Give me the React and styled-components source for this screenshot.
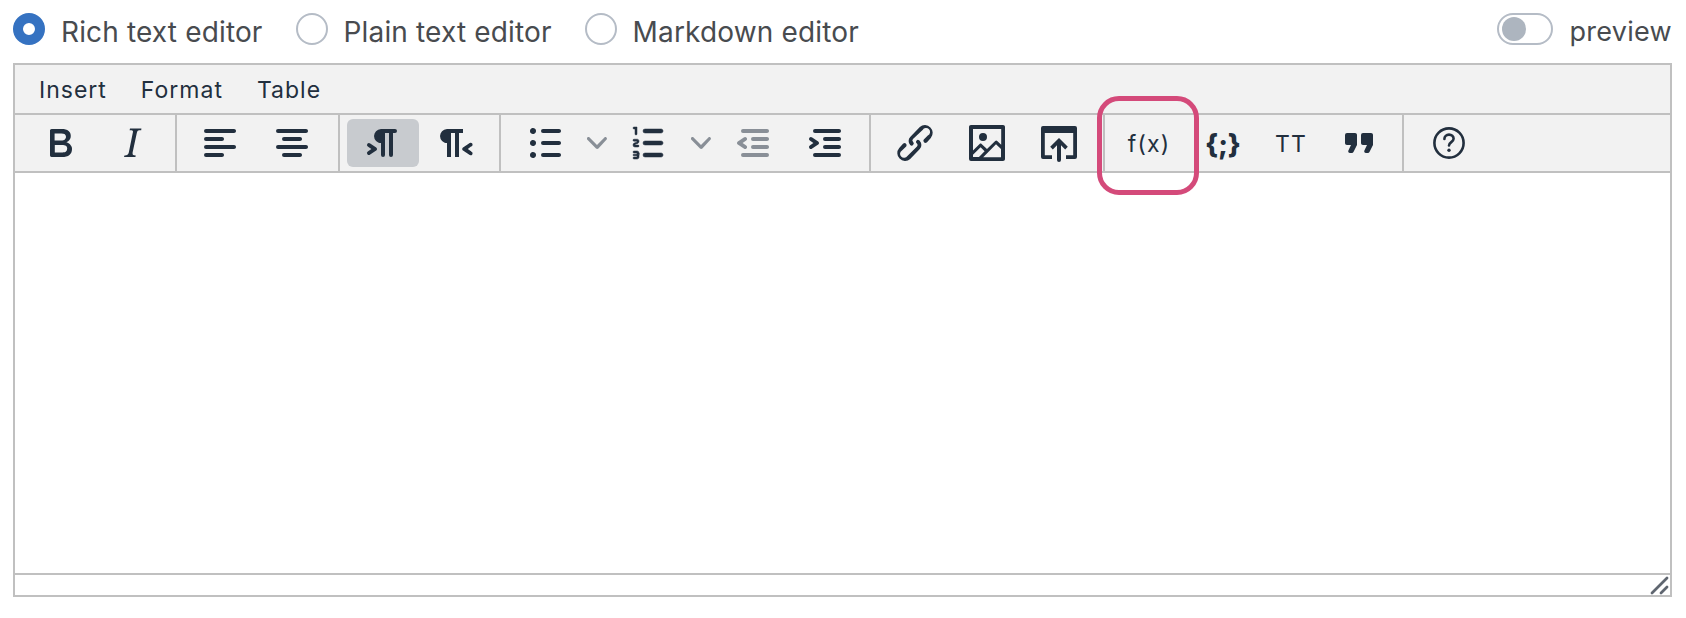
import React from 'react'
import styled, { createGlobalStyle } from 'styled-components'

const ICONS = {
  bold: 'M7.8 19c-.3 0-.5 0-.6-.2l-.2-.5V5.7c0-.2 0-.4.2-.5l.6-.2h5c1.5 0 2.7.3 3.5 1 .7.6 1.1 1.4 1.1 2.5a3 3 0 0 1-.6 1.9c-.4.6-1 1-1.6 1.2.4.1.9.3 1.3.6s.8.7 1 1.2c.4.4.5 1 .5 1.6 0 1.3-.4 2.3-1.3 3-.8.7-2.1 1-3.8 1H7.8zm5-8.3c.6 0 1.2-.1 1.6-.5.4-.3.6-.7.6-1.3 0-1.1-.8-1.7-2.3-1.7H9.3v3.5h3.4zm.5 6c.7 0 1.3-.1 1.7-.4.4-.4.6-.9.6-1.5s-.2-1-.7-1.4c-.4-.3-1-.4-2-.4H9.4v3.8h4z',
  italic: 'M16.7 4.7l-.1.9h-.3c-.6 0-1 0-1.4.3-.3.3-.4.6-.5 1.1l-2.1 9.8v.6c0 .5.4.8 1.4.8h.2l-.2.8H8l.2-.8h.2c1.1 0 1.8-.5 2-1.5l2-9.8.1-.5c0-.6-.4-.8-1.4-.8h-.3l.2-.9h5.8z',
  alignLeft: 'M5 5h14c.6 0 1 .4 1 1s-.4 1-1 1H5a1 1 0 1 1 0-2zm0 4h8c.6 0 1 .4 1 1s-.4 1-1 1H5a1 1 0 1 1 0-2zm0 8h8c.6 0 1 .4 1 1s-.4 1-1 1H5a1 1 0 0 1 0-2zm0-4h14c.6 0 1 .4 1 1s-.4 1-1 1H5a1 1 0 0 1 0-2z',
  alignCenter: 'M5 5h14c.6 0 1 .4 1 1s-.4 1-1 1H5a1 1 0 1 1 0-2zm3 4h8c.6 0 1 .4 1 1s-.4 1-1 1H8a1 1 0 1 1 0-2zm0 8h8c.6 0 1 .4 1 1s-.4 1-1 1H8a1 1 0 0 1 0-2zm-3-4h14c.6 0 1 .4 1 1s-.4 1-1 1H5a1 1 0 0 1 0-2z',
  ltr: 'M11 5h7a1 1 0 0 1 0 2h-1v11a1 1 0 0 1-2 0V7h-2v11a1 1 0 0 1-2 0v-6c-.5 0-1 0-1.4-.3A3.4 3.4 0 0 1 7.8 10a3.3 3.3 0 0 1 0-2.8 3.4 3.4 0 0 1 1.8-1.8L11 5zM4.4 16.2L6.2 15l-1.8-1.2a1 1 0 0 1 1.2-1.6l3 2a1 1 0 0 1 0 1.6l-3 2a1 1 0 1 1-1.2-1.6z',
  rtl: 'M8 5h8v2h-2v12h-2V7h-2v12H8v-7c-.5 0-1 0-1.4-.3A3.4 3.4 0 0 1 4.8 10a3.3 3.3 0 0 1 0-2.8 3.4 3.4 0 0 1 1.8-1.8L8 5zm12 11.2a1 1 0 1 1-1 1.6l-3-2a1 1 0 0 1 0-1.6l3-2a1 1 0 1 1 1 1.6L18.4 15l1.8 1.2z',
  bullist: 'M11 5h8c.6 0 1 .4 1 1s-.4 1-1 1h-8a1 1 0 0 1 0-2zm0 6h8c.6 0 1 .4 1 1s-.4 1-1 1h-8a1 1 0 0 1 0-2zm0 6h8c.6 0 1 .4 1 1s-.4 1-1 1h-8a1 1 0 0 1 0-2zM4.5 6c0-.4.1-.8.4-1 .3-.4.7-.5 1.1-.5s.8.1 1 .4c.4.3.5.7.5 1.1s-.1.8-.4 1c-.3.4-.7.5-1.1.5s-.8-.1-1-.4c-.4-.3-.5-.7-.5-1.1zm0 6c0-.4.1-.8.4-1 .3-.4.7-.5 1.1-.5s.8.1 1 .4c.4.3.5.7.5 1.1s-.1.8-.4 1c-.3.4-.7.5-1.1.5s-.8-.1-1-.4c-.4-.3-.5-.7-.5-1.1zm0 6c0-.4.1-.8.4-1 .3-.4.7-.5 1.1-.5s.8.1 1 .4c.4.3.5.7.5 1.1s-.1.8-.4 1c-.3.4-.7.5-1.1.5s-.8-.1-1-.4c-.4-.3-.5-.7-.5-1.1z',
  numlist: 'M10 17h8c.6 0 1 .4 1 1s-.4 1-1 1h-8a1 1 0 0 1 0-2zm0-6h8c.6 0 1 .4 1 1s-.4 1-1 1h-8a1 1 0 0 1 0-2zm0-6h8c.6 0 1 .4 1 1s-.4 1-1 1h-8a1 1 0 1 1 0-2zM6 4v3.5c0 .3-.2.5-.5.5a.5.5 0 0 1-.5-.5V5h-.5a.5.5 0 0 1 0-1H6zm-1 8.8l.2.2h1.3c.3 0 .5.2.5.5s-.2.5-.5.5H4.9a1 1 0 0 1-.9-1V13c0-.4.3-.8.6-1l1.2-.4.2-.3a.2.2 0 0 0-.2-.2H4.5a.5.5 0 0 1-.5-.5c0-.3.2-.5.5-.5h1.6c.5 0 .9.4.9 1v.1c0 .4-.3.8-.6 1l-1.2.4-.2.3zM7 17v2c0 .6-.4 1-1 1H4.5a.5.5 0 0 1 0-1h1.2c.2 0 .3-.1.3-.3 0-.2-.1-.3-.3-.3H4.4a.4.4 0 1 1 0-.8h1.3c.2 0 .3-.1.3-.3 0-.2-.1-.3-.3-.3H4.5a.5.5 0 1 1 0-1H6c.6 0 1 .4 1 1v.3c0 .2 0 .3-.2.4.1.1.2.2.2.4z',
  outdent: 'M7 5h12c.6 0 1 .4 1 1s-.4 1-1 1H7a1 1 0 1 1 0-2zm5 4h7c.6 0 1 .4 1 1s-.4 1-1 1h-7a1 1 0 0 1 0-2zm0 4h7c.6 0 1 .4 1 1s-.4 1-1 1h-7a1 1 0 0 1 0-2zm-5 4h12a1 1 0 0 1 0 2H7a1 1 0 0 1 0-2zm1.6-3.8a1 1 0 0 1-1.2 1.6l-3-2a1 1 0 0 1 0-1.6l3-2a1 1 0 0 1 1.2 1.6L6.8 12l1.8 1.2z',
  indent: 'M7 5h12c.6 0 1 .4 1 1s-.4 1-1 1H7a1 1 0 1 1 0-2zm5 4h7c.6 0 1 .4 1 1s-.4 1-1 1h-7a1 1 0 0 1 0-2zm0 4h7c.6 0 1 .4 1 1s-.4 1-1 1h-7a1 1 0 0 1 0-2zm-5 4h12a1 1 0 0 1 0 2H7a1 1 0 0 1 0-2zm-2.6-3.8L6.2 12l-1.8-1.2a1 1 0 0 1 1.2-1.6l3 2a1 1 0 0 1 0 1.6l-3 2a1 1 0 1 1-1.2-1.6z',
  link: 'M6.2 12.3a1 1 0 0 1 1.4 1.4l-2.1 2a2 2 0 1 0 2.7 2.8l4.8-4.8a1 1 0 0 0 0-1.4 1 1 0 1 1 1.4-1.3 2.9 2.9 0 0 1 0 4L9.6 20a3.9 3.9 0 0 1-5.5-5.5l2-2.2zm11.6-.6a1 1 0 0 1-1.4-1.4l2-2a2 2 0 1 0-2.6-2.8L11 10a1 1 0 0 0 0 1.4A1 1 0 1 1 9.6 13a2.9 2.9 0 0 1 0-4L14.4 4a3.9 3.9 0 0 1 5.5 5.5l-2 2.2z',
  image: 'M5 15.7l3.3-3.2c.3-.3.7-.3 1 0L12 15l4.1-4c.3-.4.8-.4 1 0l2 1.9V5H5v10.7zM5 18V19h3l2.8-2.9-2-2L5 17.9zm14-3l-2.5-2.4-6.4 6.5H19v-4zM4 3h16c.6 0 1 .4 1 1v16c0 .6-.4 1-1 1H4a1 1 0 0 1-1-1V4c0-.6.4-1 1-1zm6 8a2 2 0 1 0 0-4 2 2 0 0 0 0 4z',
  upload: 'M4 3.500h16a1 1 0 0 1 1 1V19a1 1 0 0 1-1 1h-4.500v-1.900h3.600V7H4.900v11.100h3.600V20H4a1 1 0 0 1-1-1V4.500a1 1 0 0 1 1-1zM12 9.500l4.400 4.400-1.300 1.300-2.100-2.100V20.500a1 1 0 0 1-2 0v-7.400l-2.100 2.100-1.300-1.300z',
  quote: 'M7.500 17h.9c.4 0 .7-.2.9-.6L11 13V8c0-.6-.4-1-1-1H6a1 1 0 0 0-1 1v4c0 .6.4 1 1 1h2l-1.300 2.700a1 1 0 0 0 .8 1.300zm8 0h.9c.4 0 .7-.2.9-.6L19 13V8c0-.6-.4-1-1-1h-4a1 1 0 0 0-1 1v4c0 .6.4 1 1 1h2l-1.300 2.700a1 1 0 0 0 .8 1.300z',
}

const GROUPS = [
  { left: 9, right: 7, items: [{ icon: 'bold' }, { icon: 'italic' }] },
  { left: 7, right: 10, items: [{ icon: 'alignLeft' }, { icon: 'alignCenter' }] },
  { left: 7, right: 8, items: [{ icon: 'ltr', active: true }, { icon: 'rtl' }] },
  {
    left: 8,
    right: 8,
    items: [
      { icon: 'bullist' },
      { chevron: true },
      { icon: 'numlist', heavy: true },
      { chevron: true },
      { icon: 'outdent', disabled: true },
      { icon: 'indent' },
    ],
  },
  {
    left: 8,
    right: 8,
    items: [{ icon: 'link' }, { icon: 'image' }, { icon: 'upload' }],
  },
  {
    left: 7,
    right: 9,
    items: [
      { text: 'f(x)', width: 74, highlight: true },
      { text: '{;}', strong: true, width: 68, offset: 3 },
      { text: 'TT', width: 68 },
      { icon: 'quote', width: 68 },
    ],
  },
  { left: 9, right: 0, items: [{ help: true }] },
]

const GlobalStyle = createGlobalStyle`
  body {
    margin: 0;
    background: #fff;
    font-family: Inter, "Liberation Sans", sans-serif;
  }
`

function Icon({ d, heavy }) {
  return (
    <IconSvg viewBox="0 0 24 24" $heavy={heavy}>
      <path d={d} fillRule="evenodd" />
    </IconSvg>
  )
}

function ToolButton({ item }) {
  if (item.chevron) {
    return (
      <Chevron>
        <svg width="20" height="20" viewBox="0 0 10 10" fill="#222f3e">
          <path d="M8.700 2.200c.3-.3.8-.3 1 0 .4.400.4.900 0 1.200L5.700 7.800c-.3.3-.9.3-1.200 0L.2 3.400a.8.800 0 0 1 0-1.200c.3-.3.800-.3 1.100 0L5 6l3.700-3.800z" />
        </svg>
      </Chevron>
    )
  }
  return (
    <Button
      $active={item.active}
      $disabled={item.disabled}
      $width={item.width}
      $offset={item.offset}
    >
      {item.icon && <Icon d={ICONS[item.icon]} heavy={item.heavy} />}
      {item.help && (
        <IconSvg viewBox="0 0 24 24">
          <circle cx="12" cy="12" r="7.300" fill="none" stroke="#222f3e" strokeWidth="1.300" />
          <path
            d="M9.700 10c0-1.300 1-2.200 2.300-2.200s2.300.9 2.300 2.100c0 1.600-2.300 1.700-2.300 3.300"
            fill="none"
            stroke="#222f3e"
            strokeWidth="1.300"
            strokeLinecap="round"
          />
          <circle cx="12" cy="15.600" r=".85" />
        </IconSvg>
      )}
      {item.text && <ButtonText $strong={item.strong}>{item.text}</ButtonText>}
      {item.highlight && <Highlight />}
    </Button>
  )
}

export default function App() {
  return (
    <Page>
      <GlobalStyle />
      <ModeRow>
        <Mode>
          <Radio $checked />
          <ModeText>Rich text editor</ModeText>
        </Mode>
        <Mode>
          <Radio />
          <ModeText>Plain text editor</ModeText>
        </Mode>
        <Mode>
          <Radio />
          <ModeText>Markdown editor</ModeText>
        </Mode>
        <Preview>
          <Toggle />
          <ModeText $small>preview</ModeText>
        </Preview>
      </ModeRow>
      <Editor>
        <MenuBar>
          <MenuItem>Insert</MenuItem>
          <MenuItem>Format</MenuItem>
          <MenuItem>Table</MenuItem>
        </MenuBar>
        <Toolbar>
          {GROUPS.map((group, index) => (
            <Group key={index} $left={group.left} $right={group.right}>
              {group.items.map((item, i) => (
                <ToolButton key={i} item={item} />
              ))}
            </Group>
          ))}
        </Toolbar>
        <EditArea />
        <StatusBar>
          <svg width="20" height="20" viewBox="0 0 20 20">
            <path
              d="M2 18 L17 3 M11 18 L17 12"
              stroke="#5f6670"
              strokeWidth="2.800"
              strokeLinecap="round"
            />
          </svg>
        </StatusBar>
      </Editor>
    </Page>
  )
}

const Page = styled.div`
  width: 1686px;
  height: 618px;
  padding: 13px 14px 0 13px;
  box-sizing: border-box;
`

const ModeRow = styled.div`
  display: flex;
  align-items: center;
  height: 32px;
  margin-bottom: 18px;
  gap: 33px;
`

const Mode = styled.label`
  display: flex;
  align-items: center;
  gap: 16px;
`

const ModeText = styled.span`
  padding-top: 5px;
  font-size: ${props => (props.$small ? 27 : 28)}px;
  letter-spacing: ${props => (props.$small ? 0.3 : 0.15)}px;
  color: #484b4f;
`

const Radio = styled.span`
  width: 32px;
  height: 32px;
  box-sizing: border-box;
  border-radius: 50%;
  border: ${props => (props.$checked ? '10px solid #3572c1' : '2px solid #b5bcc6')};
  background: #fff;
`

const Preview = styled(Mode)`
  margin-left: auto;
  gap: 16px;
`

const Toggle = styled.span`
  display: flex;
  align-items: center;
  width: 56px;
  height: 32px;
  box-sizing: border-box;
  padding-left: 3px;
  border: 2px solid #b5bcc6;
  border-radius: 16px;

  &::before {
    content: '';
    width: 24px;
    height: 24px;
    border-radius: 50%;
    background: #adb5bf;
  }
`

const Editor = styled.div`
  display: flex;
  flex-direction: column;
  width: 1659px;
  height: 534px;
  box-sizing: border-box;
  border: 2px solid #c0c0c0;
  color: #222f3e;
`

const MenuBar = styled.div`
  display: flex;
  align-items: center;
  height: 50px;
  box-sizing: border-box;
  padding-left: 24px;
  gap: 34px;
  background: #f2f2f2;
  border-bottom: 2px solid #c0c0c0;
`

const MenuItem = styled.span`
  padding-top: 2px;
  font-size: 23px;
  letter-spacing: 1px;
`

const Toolbar = styled.div`
  display: flex;
  height: 58px;
  box-sizing: border-box;
  background: #f2f2f2;
  border-bottom: 2px solid #c0c0c0;
`

const Group = styled.div`
  display: flex;
  align-items: center;
  padding: 0 ${props => props.$right}px 0 ${props => props.$left}px;
  border-right: 2px solid #c0c0c0;

  &:last-child {
    border-right: 0;
  }
`

const Button = styled.div`
  position: relative;
  display: flex;
  align-items: center;
  justify-content: center;
  flex: none;
  width: ${props => props.$width || 72}px;
  height: 48px;
  margin-left: ${props => props.$offset || 0}px;
  border-radius: 6px;
  background: ${props => (props.$active ? '#c8cbcf' : 'transparent')};
  opacity: ${props => (props.$disabled ? 0.5 : 1)};
`

const Chevron = styled.div`
  display: flex;
  align-items: center;
  justify-content: center;
  flex: none;
  width: 32px;
  height: 48px;
  opacity: 0.5;
`

const IconSvg = styled.svg`
  width: 48px;
  height: 48px;
  fill: #222f3e;
  stroke: ${props => (props.$heavy ? '#222f3e' : 'none')};
  stroke-width: 0.25;
`

const ButtonText = styled.span`
  padding-top: 2px;
  font-size: ${props => (props.$strong ? 27 : 23)}px;
  letter-spacing: ${props => (props.$strong ? 0 : 1.2)}px;
  font-weight: ${props => (props.$strong ? 800 : 400)};
`

const Highlight = styled.span`
  position: absolute;
  left: -15px;
  top: -23px;
  width: 102px;
  height: 99px;
  box-sizing: border-box;
  border: 5px solid #d44a7a;
  border-radius: 22px;
`

const EditArea = styled.div`
  flex: 1;
  background: #fff;
`

const StatusBar = styled.div`
  display: flex;
  justify-content: flex-end;
  align-items: center;
  height: 22px;
  box-sizing: border-box;
  border-top: 2px solid #c0c0c0;
  background: #fff;
`
